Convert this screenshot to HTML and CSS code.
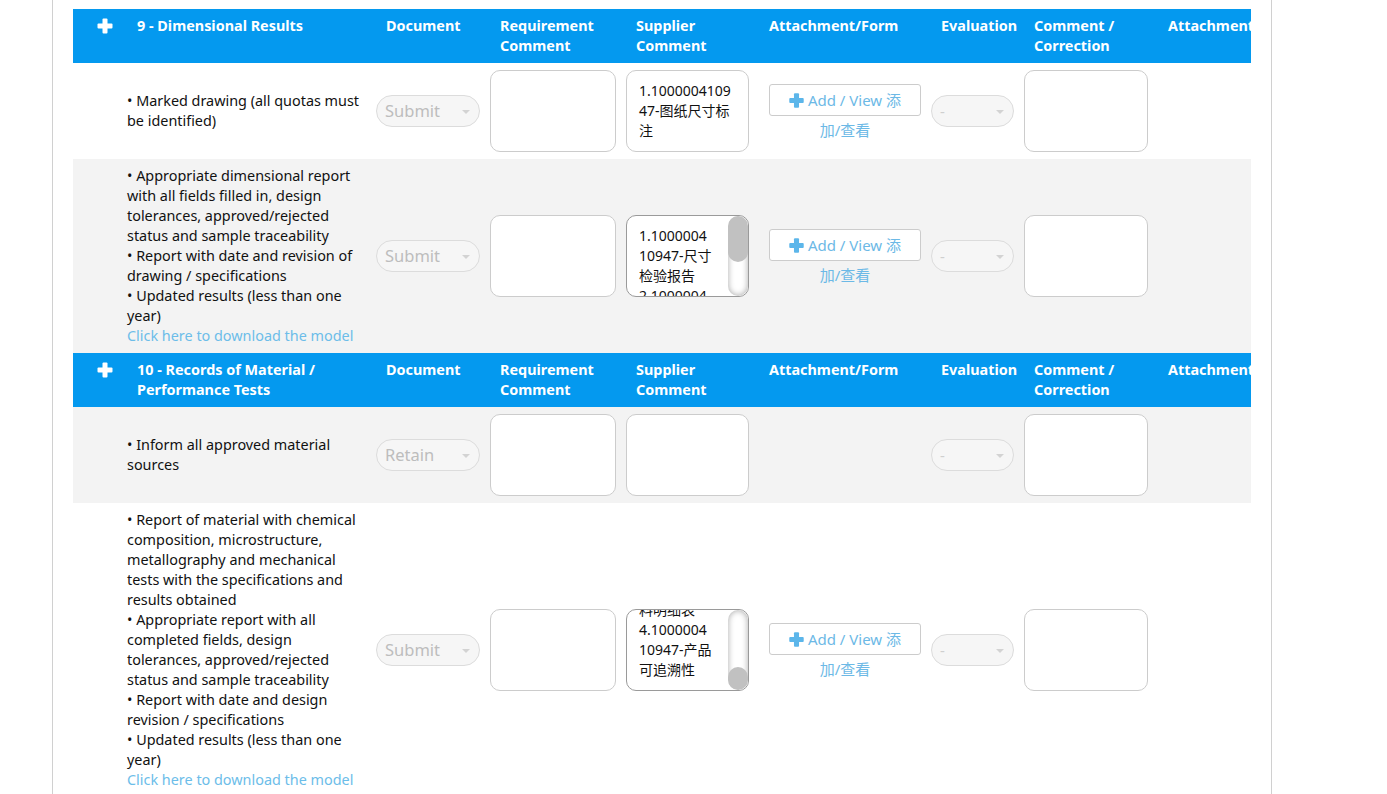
FILE: index.html
```html
<!DOCTYPE html>
<html>
<head>
<meta charset="utf-8">
<title>Supplier documents</title>
<link rel="stylesheet" href="styles.css">
</head>
<body>
<div class="page">
  <div class="wrap">
    <table class="grid">
      <colgroup>
        <col class="c-icon"><col class="c-desc"><col class="c-doc"><col class="c-req"><col class="c-sup"><col class="c-att"><col class="c-eval"><col class="c-cmt"><col class="c-att2">
      </colgroup>
      <tbody>
        <tr class="head">
          <th class="icon"><svg class="plus" viewBox="0 0 16 16" width="16" height="16"><rect x="5.5" y="0.5" width="5" height="15" rx="1" fill="#fff"/><rect x="0.5" y="5.5" width="15" height="5" rx="1" fill="#fff"/></svg></th>
          <th>9 - Dimensional Results</th>
          <th>Document</th>
          <th>Requirement Comment</th>
          <th>Supplier Comment</th>
          <th>Attachment/Form</th>
          <th>Evaluation</th>
          <th>Comment / Correction</th>
          <th>Attachment</th>
        </tr>
        <tr class="row white">
          <td></td>
          <td class="desc">• Marked drawing (all quotas must be identified)</td>
          <td><div class="sel sel-doc"><span>Submit</span></div></td>
          <td><textarea class="ta ta-req" readonly></textarea></td>
          <td><textarea class="ta ta-sup" readonly>1.100000410947-图纸尺寸标注</textarea></td>
          <td><div class="addview"><a class="btn"><svg class="bplus" viewBox="0 0 16 16" width="15" height="15"><rect x="5.3" y="0.3" width="5.4" height="15.4" rx="1" fill="#5cb6ea"/><rect x="0.3" y="5.3" width="15.4" height="5.4" rx="1" fill="#5cb6ea"/></svg>Add / View 添加/查看</a></div></td>
          <td><div class="sel sel-eval"><span>-</span></div></td>
          <td><textarea class="ta ta-cmt" readonly></textarea></td>
          <td></td>
        </tr>
        <tr class="row gray">
          <td></td>
          <td class="desc">• Appropriate dimensional report with all fields filled in, design tolerances, approved/rejected status and sample traceability<br>• Report with date and revision of drawing / specifications<br>• Updated results (less than one year)<br><a class="dl">Click here to download the model</a></td>
          <td><div class="sel sel-doc"><span>Submit</span></div></td>
          <td><textarea class="ta ta-req" readonly></textarea></td>
          <td>
            <div class="ta-box">
              <textarea class="ta ta-sup scroll" readonly>1.100000410947-尺寸检验报告
2.100000410947-外观检验报告</textarea>
              <div class="sbar"><div class="sthumb thumb-top"></div></div>
            </div>
          </td>
          <td><div class="addview"><a class="btn"><svg class="bplus" viewBox="0 0 16 16" width="15" height="15"><rect x="5.3" y="0.3" width="5.4" height="15.4" rx="1" fill="#5cb6ea"/><rect x="0.3" y="5.3" width="15.4" height="5.4" rx="1" fill="#5cb6ea"/></svg>Add / View 添加/查看</a></div></td>
          <td><div class="sel sel-eval"><span>-</span></div></td>
          <td><textarea class="ta ta-cmt" readonly></textarea></td>
          <td></td>
        </tr>
        <tr class="head">
          <th class="icon"><svg class="plus" viewBox="0 0 16 16" width="16" height="16"><rect x="5.5" y="0.5" width="5" height="15" rx="1" fill="#fff"/><rect x="0.5" y="5.5" width="15" height="5" rx="1" fill="#fff"/></svg></th>
          <th>10 - Records of Material / Performance Tests</th>
          <th>Document</th>
          <th>Requirement Comment</th>
          <th>Supplier Comment</th>
          <th>Attachment/Form</th>
          <th>Evaluation</th>
          <th>Comment / Correction</th>
          <th>Attachment</th>
        </tr>
        <tr class="row gray">
          <td></td>
          <td class="desc">• Inform all approved material sources</td>
          <td><div class="sel sel-doc"><span>Retain</span></div></td>
          <td><textarea class="ta ta-req" readonly></textarea></td>
          <td><textarea class="ta ta-sup" readonly></textarea></td>
          <td></td>
          <td><div class="sel sel-eval"><span>-</span></div></td>
          <td><textarea class="ta ta-cmt" readonly></textarea></td>
          <td></td>
        </tr>
        <tr class="row white">
          <td></td>
          <td class="desc">• Report of material with chemical composition, microstructure, metallography and mechanical tests with the specifications and results obtained<br>• Appropriate report with all completed fields, design tolerances, approved/rejected status and sample traceability<br>• Report with date and design revision / specifications<br>• Updated results (less than one year)<br><a class="dl">Click here to download the model</a></td>
          <td><div class="sel sel-doc"><span>Submit</span></div></td>
          <td><textarea class="ta ta-req" readonly></textarea></td>
          <td>
            <div class="ta-box">
              <textarea class="ta ta-sup scroll scroll-end" readonly>1.100000410947-材料成分报告
2.100000410947-力学性能报告
3.100000410947-原材料明细表
4.100000410947-产品可追溯性</textarea>
              <div class="sbar"><div class="sthumb thumb-bottom"></div></div>
            </div>
          </td>
          <td><div class="addview"><a class="btn"><svg class="bplus" viewBox="0 0 16 16" width="15" height="15"><rect x="5.3" y="0.3" width="5.4" height="15.4" rx="1" fill="#5cb6ea"/><rect x="0.3" y="5.3" width="15.4" height="5.4" rx="1" fill="#5cb6ea"/></svg>Add / View 添加/查看</a></div></td>
          <td><div class="sel sel-eval"><span>-</span></div></td>
          <td><textarea class="ta ta-cmt" readonly></textarea></td>
          <td></td>
        </tr>
      </tbody>
    </table>
  </div>
</div>
<script src="script.js"></script>
</body>
</html>
```

FILE: styles.css
```css
html, body {
  margin: 0;
  padding: 0;
  background: #fff;
}
body {
  font-family: "Noto Sans", "Noto Sans CJK SC", sans-serif;
  font-size: 14.4px;
  line-height: 20px;
  color: #111;
}
.page {
  margin-left: 52px;
  width: 1178px;
  padding: 9px 20px 0 20px;
  border-left: 1px solid #d0d0d0;
  border-right: 1px solid #d0d0d0;
  min-height: 900px;
}
.wrap {
  width: 1178px;
  overflow: hidden;
}
.grid {
  table-layout: fixed;
  width: 1235px;
  border-collapse: collapse;
  border-spacing: 0;
}
.c-icon { width: 54px; }
.c-desc { width: 249px; }
.c-doc { width: 114px; }
.c-req { width: 136px; }
.c-sup { width: 133px; }
.c-att { width: 172px; }
.c-eval { width: 93px; }
.c-cmt { width: 134px; }
.c-att2 { width: 150px; }

.head {
  background: #0499ef;
  color: #fff;
}
.head th {
  text-align: left;
  vertical-align: top;
  font-weight: bold;
  padding: 7px 10px 7px 10px;
  height: 40px;
  white-space: normal;
}
.head th.icon {
  padding: 9px 0 0 24px;
}
.plus { display: block; }

.row.white { background: #fff; }
.row.gray { background: #f3f3f3; }
.row td {
  padding: 7px 0;
  vertical-align: middle;
}
.row td.desc {
  padding-right: 10px;
}
.dl {
  color: #6cbde9;
  text-decoration: none;
}

.sel {
  position: relative;
  box-sizing: border-box;
  height: 32px;
  border: 1px solid #dcdcdc;
  border-radius: 16px;
  background: #f6f6f6;
  color: #bdbdbd;
  font-size: 16.5px;
  line-height: 30px;
  padding-left: 8px;
}
.sel::after {
  content: "";
  position: absolute;
  top: 14px;
  right: 9px;
  border-left: 4px solid transparent;
  border-right: 4px solid transparent;
  border-top: 4px solid #d3d3d3;
}
.sel-doc { width: 104px; }
.sel-eval { width: 83px; }
.sel-eval span { font-size: 15px; color: #cfcfcf; }

.ta {
  display: block;
  box-sizing: border-box;
  height: 82px;
  margin: 0;
  border: 1px solid #cccccc;
  border-radius: 10px;
  background: #fff;
  padding: 10px 12px;
  font-family: "Noto Sans", "Noto Sans CJK SC", sans-serif;
  font-size: 14px;
  line-height: 20px;
  color: #111;
  resize: none;
  overflow: hidden;
  outline: none;
}
.ta-req { width: 126px; }
.ta-sup { width: 123px; }
.ta-cmt { width: 124px; }

.ta-box {
  position: relative;
  width: 123px;
}
.ta.scroll {
  padding-right: 35px;
  border-color: #9a9a9a;
}
.sbar {
  position: absolute;
  top: 1px;
  bottom: 1px;
  right: 1px;
  width: 20px;
  border-radius: 10px;
  background: #fff;
  box-shadow: inset 0 0 6px rgba(0, 0, 0, 0.35);
  overflow: hidden;
}
.sthumb {
  position: absolute;
  left: 0;
  right: 0;
  border-radius: 10px;
  background: #c1c1c1;
}
.thumb-top { top: 0; height: 46px; }
.thumb-bottom { bottom: 0; height: 23px; }

.addview {
  padding-left: 10px;
  padding-bottom: 23px;
}
.btn {
  display: block;
  box-sizing: border-box;
  width: 152px;
  height: 32px;
  border: 1px solid #cccccc;
  border-radius: 3px;
  background: #fff;
  color: #6cb9e6;
  text-align: center;
  line-height: 30px;
  padding: 0 18px;
  font-size: 15px;
  cursor: pointer;
}
.bplus {
  vertical-align: -2px;
  margin-right: 4px;
}
```

FILE: script.js
```js
document.querySelectorAll('.scroll-end').forEach(function (t) {
  t.scrollTop = t.scrollHeight;
});
```
